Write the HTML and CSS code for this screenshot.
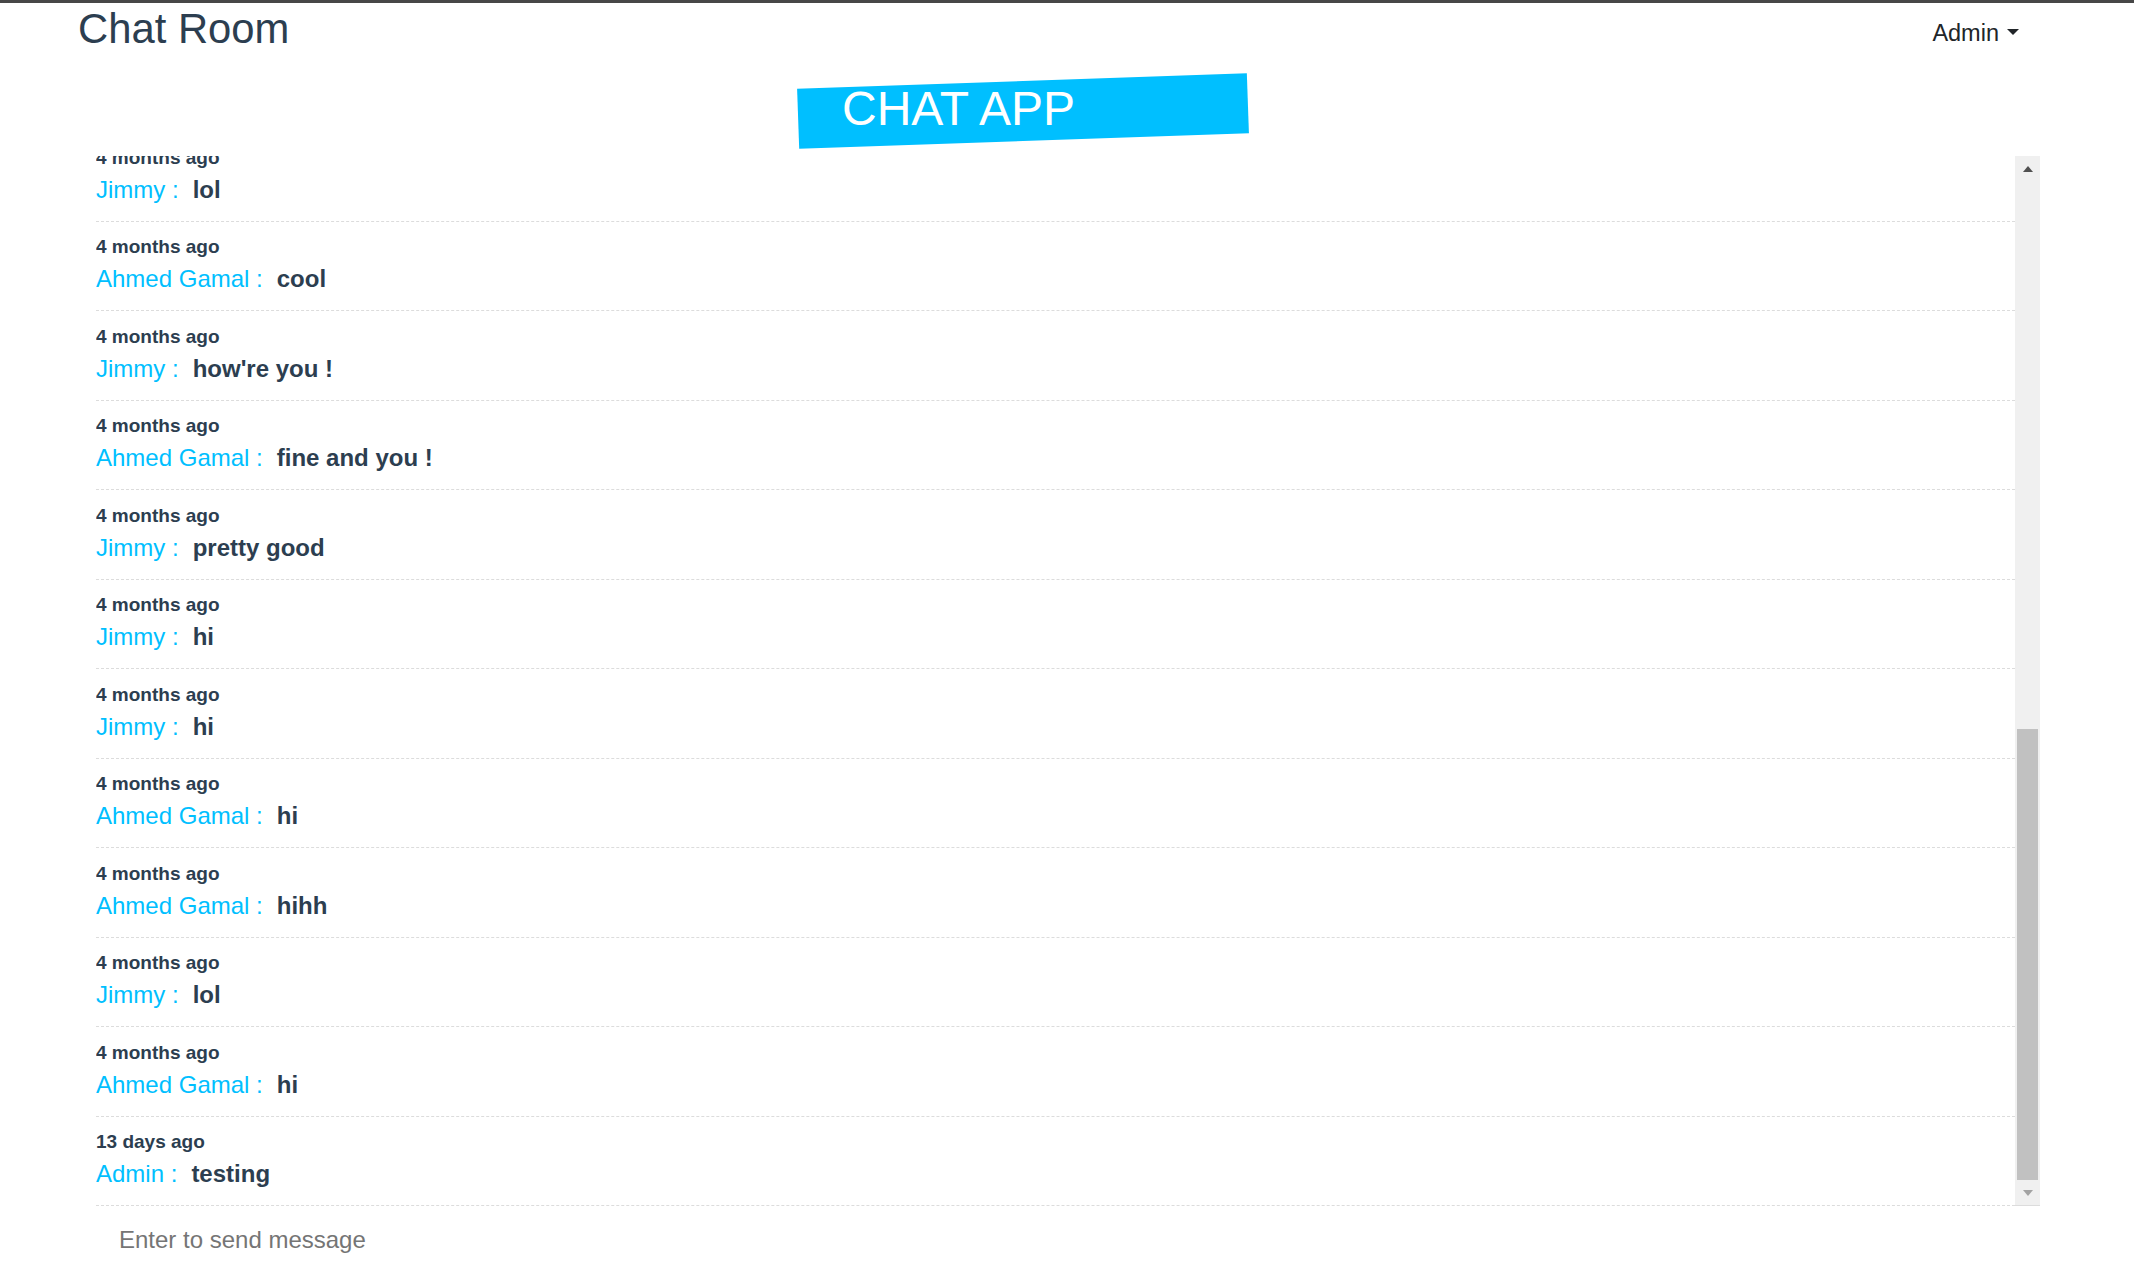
FILE: index.html
```html
<!DOCTYPE html>
<html lang="en">
<head>
<meta charset="utf-8">
<title>Chat Room</title>
<link rel="stylesheet" href="styles.css">
</head>
<body>
<nav class="navbar">
  <div class="brand">Chat Room</div>
  <div class="user-menu">Admin<span class="caret"></span></div>
</nav>
<div class="banner-wrap">
  <div class="banner"><span class="banner-text">CHAT APP</span></div>
</div>
<div class="chat">
  <div class="messages">
    <div class="msg first">
      <div class="time">4 months ago</div>
      <div class="line"><span class="name">Jimmy :</span><span class="text">lol</span></div>
    </div>
    <div class="msg">
      <div class="time">4 months ago</div>
      <div class="line"><span class="name">Ahmed Gamal :</span><span class="text">cool</span></div>
    </div>
    <div class="msg">
      <div class="time">4 months ago</div>
      <div class="line"><span class="name">Jimmy :</span><span class="text">how're you !</span></div>
    </div>
    <div class="msg">
      <div class="time">4 months ago</div>
      <div class="line"><span class="name">Ahmed Gamal :</span><span class="text">fine and you !</span></div>
    </div>
    <div class="msg">
      <div class="time">4 months ago</div>
      <div class="line"><span class="name">Jimmy :</span><span class="text">pretty good</span></div>
    </div>
    <div class="msg">
      <div class="time">4 months ago</div>
      <div class="line"><span class="name">Jimmy :</span><span class="text">hi</span></div>
    </div>
    <div class="msg">
      <div class="time">4 months ago</div>
      <div class="line"><span class="name">Jimmy :</span><span class="text">hi</span></div>
    </div>
    <div class="msg">
      <div class="time">4 months ago</div>
      <div class="line"><span class="name">Ahmed Gamal :</span><span class="text">hi</span></div>
    </div>
    <div class="msg">
      <div class="time">4 months ago</div>
      <div class="line"><span class="name">Ahmed Gamal :</span><span class="text">hihh</span></div>
    </div>
    <div class="msg">
      <div class="time">4 months ago</div>
      <div class="line"><span class="name">Jimmy :</span><span class="text">lol</span></div>
    </div>
    <div class="msg">
      <div class="time">4 months ago</div>
      <div class="line"><span class="name">Ahmed Gamal :</span><span class="text">hi</span></div>
    </div>
    <div class="msg">
      <div class="time">13 days ago</div>
      <div class="line"><span class="name">Admin :</span><span class="text">testing</span></div>
    </div>
  </div>
  <div class="scrollbar">
    <div class="sb-btn"><span class="arrow-up"></span></div>
    <div class="sb-track"><div class="sb-thumb"></div></div>
    <div class="sb-btn"><span class="arrow-down"></span></div>
  </div>
</div>
<div class="composer">
  <input class="composer-input" type="text" placeholder="Enter to send message">
</div>
</body>
</html>
```
FILE: styles.css
```css
html, body {
  margin: 0;
  padding: 0;
  background: #fff;
}
body {
  border-top: 3px solid #474747;
  font-family: "Liberation Sans", Arial, sans-serif;
  color: #2c3e50;
  overflow: hidden;
}
.navbar {
  display: flex;
  justify-content: space-between;
  align-items: flex-start;
  height: 54px;
  box-sizing: border-box;
  padding: 4.5px 115px 0 78px;
}
.brand {
  font-size: 41.8px;
  line-height: 42px;
  color: #2c3e50;
}
.user-menu {
  margin-top: 14px;
  font-size: 23.5px;
  line-height: 23px;
  color: #212529;
  display: flex;
  align-items: center;
}
.caret {
  display: inline-block;
  margin-left: 8px;
  margin-top: -2px;
  border-top: 6px solid #212529;
  border-left: 6px solid transparent;
  border-right: 6px solid transparent;
}
.banner-wrap {
  padding-left: 798px;
  margin-top: 24px;
}
.banner {
  position: relative;
  isolation: isolate;
  width: 450px;
  height: 59.5px;
  box-sizing: border-box;
  padding-left: 44px;
  font-size: 48px;
  line-height: 56px;
  color: #fff;
}
.banner::before {
  content: "";
  position: absolute;
  inset: 0;
  background: #00bfff;
  transform: rotate(-2deg);
  z-index: -1;
}
.banner-text {
  position: relative;
}
.chat {
  display: flex;
  margin: 15.3px 94px 0 96px;
  height: 1050.5px;
}
.messages {
  flex: 1;
  overflow: hidden;
}
.msg {
  padding: 11.5px 0 13px;
  border-bottom: 1px dashed #dcdcdc;
}
.msg.first {
  margin-top: -23.5px;
}
.time {
  font-size: 19px;
  line-height: 28px;
  font-weight: bold;
  color: #2c3e50;
}
.line {
  font-size: 24px;
  line-height: 36px;
  white-space: nowrap;
}
.name {
  color: #00bfff;
  margin-right: 14px;
}
.text {
  font-weight: bold;
  color: #2c3e50;
}
.scrollbar {
  width: 25px;
  background: #f0f0f0;
  display: flex;
  flex-direction: column;
  box-sizing: border-box;
  border-bottom: 1px solid #dcdcdc;
}
.sb-btn {
  height: 25px;
  display: flex;
  align-items: center;
  justify-content: center;
}
.sb-track {
  flex: 1;
  display: flex;
  flex-direction: column;
  justify-content: flex-end;
  align-items: center;
}
.sb-thumb {
  width: 21px;
  height: 451px;
  background: #c1c1c1;
}
.arrow-up {
  margin-top: 2px;
  border-bottom: 6px solid #505050;
  border-left: 5.5px solid transparent;
  border-right: 5.5px solid transparent;
}
.arrow-down {
  margin-top: 0;
  border-top: 6px solid #a3a3a3;
  border-left: 5.5px solid transparent;
  border-right: 5.5px solid transparent;
}
.composer {
  padding-left: 96px;
}
.composer-input {
  display: block;
  width: 600px;
  height: 68px;
  box-sizing: border-box;
  border: none;
  outline: none;
  padding: 0 0 0 23px;
  margin: 0;
  font-family: "Liberation Sans", Arial, sans-serif;
  font-size: 24px;
  color: #495057;
  background: transparent;
}
.composer-input::placeholder {
  color: #757575;
  opacity: 1;
}
```
